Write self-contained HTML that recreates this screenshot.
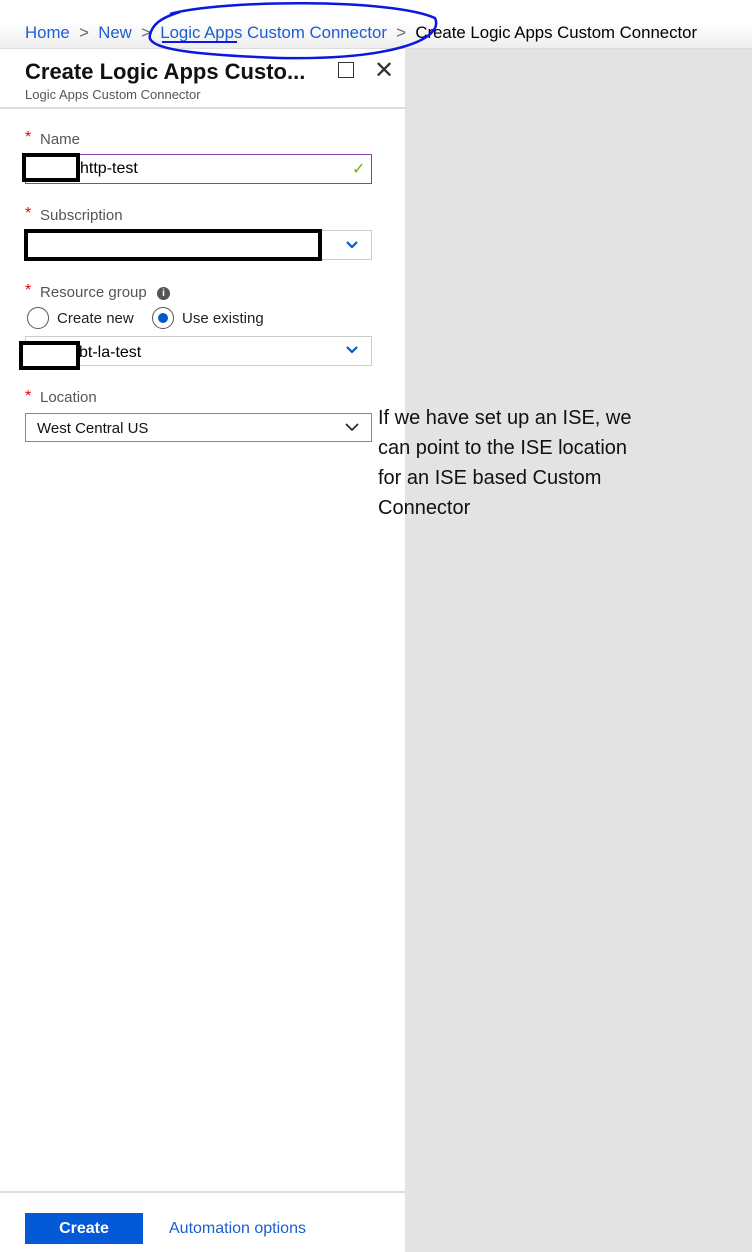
<!DOCTYPE html>
<html><head><style>
body{margin:0;width:752px;height:1252px;position:relative;overflow:hidden;background:#fff;font-family:"Liberation Sans",sans-serif;}
.a{position:absolute;}
.lbl{font-size:15px;color:#555;}
.star{color:#e00;font-size:16px;}
.box{border:1px solid #ccc;background:#fff;box-sizing:border-box;}
.blk{border:4px solid #000;background:#fff;box-sizing:border-box;}
</style></head><body>
<div class="a" style="left:0;top:22px;width:752px;height:26px;background:linear-gradient(#fff,#eee);border-bottom:1px solid #ddd"></div>
<div class="a" style="left:25px;top:23px;font-size:16.8px;color:#1b5ed0;white-space:nowrap">Home <span style="color:#666">&nbsp;&gt;&nbsp;</span> New <span style="color:#666">&nbsp;&gt;&nbsp;</span> Logic Apps Custom Connector <span style="color:#666">&nbsp;&gt;&nbsp;</span> <span style="color:#000">Create Logic Apps Custom Connector</span></div>
<svg class="a" style="left:140px;top:0" width="305" height="65"><path d="M30 14 C80 0 250 -2 295 18 C305 40 250 60 140 58 C60 55 5 50 10 35 C12 25 20 18 40 12" fill="none" stroke="#0a18e0" stroke-width="2.5"/><path d="M22 42 L97 42" stroke="#0a18e0" stroke-width="2"/></svg>
<div class="a" style="left:405px;top:49px;width:347px;height:1203px;background:#e3e3e3"></div>
<div class="a" style="left:25px;top:59px;font-size:22px;font-weight:bold;color:#111">Create Logic Apps Custo...</div>
<div class="a" style="left:25px;top:87px;font-size:13px;color:#555">Logic Apps Custom Connector</div>
<div class="a" style="left:338px;top:62px;width:14px;height:14px;border:1.5px solid #333"></div>
<div class="a" style="left:374px;top:56px;font-size:24px;color:#333">✕</div>
<div class="a" style="left:0;top:107px;width:405px;height:2px;background:#ddd"></div>

<div class="a star" style="left:25px;top:129px">*</div><div class="a lbl" style="left:40px;top:131px">Name</div>
<div class="a box" style="left:25px;top:154px;width:347px;height:30px;border-color:#8e3fa8"></div>
<div class="a" style="left:80px;top:160px;font-size:16px">http-test</div>
<div class="a" style="left:352px;top:159px;color:#6bb700;font-size:16px">✓</div>
<div class="a blk" style="left:22px;top:153px;width:58px;height:29px"></div>

<div class="a star" style="left:25px;top:205px">*</div><div class="a lbl" style="left:40px;top:207px">Subscription</div>
<div class="a box" style="left:25px;top:230px;width:347px;height:30px"></div>
<div class="a blk" style="left:24px;top:229px;width:298px;height:32px"></div>
<svg class="a" style="left:345px;top:240px" width="14" height="10"><path d="M2 2 L7 7 L12 2" fill="none" stroke="#0358c9" stroke-width="2.2"/></svg>

<div class="a star" style="left:25px;top:282px">*</div><div class="a lbl" style="left:40px;top:284px">Resource group</div>
<div class="a" style="left:157px;top:287px;width:13px;height:13px;border-radius:50%;background:#555;color:#fff;font-size:10px;text-align:center;line-height:13px;font-weight:bold">i</div>
<div class="a" style="left:27px;top:307px;width:20px;height:20px;border:1.5px solid #555;border-radius:50%"></div>
<div class="a" style="left:57px;top:310px;font-size:15px;color:#222">Create new</div>
<div class="a" style="left:152px;top:307px;width:20px;height:20px;border:1.5px solid #555;border-radius:50%"></div>
<div class="a" style="left:158px;top:313px;width:10px;height:10px;border-radius:50%;background:#0358c9"></div>
<div class="a" style="left:182px;top:310px;font-size:15px;color:#222">Use existing</div>
<div class="a box" style="left:25px;top:336px;width:347px;height:30px"></div>
<div class="a" style="left:79px;top:344px;font-size:16px">bt-la-test</div>
<div class="a blk" style="left:19px;top:341px;width:61px;height:29px"></div>
<svg class="a" style="left:345px;top:345px" width="14" height="10"><path d="M2 2 L7 7 L12 2" fill="none" stroke="#0358c9" stroke-width="2.2"/></svg>

<div class="a star" style="left:25px;top:388px">*</div><div class="a lbl" style="left:40px;top:389px">Location</div>
<div class="a box" style="left:25px;top:413px;width:347px;height:29px;border-color:#888"></div>
<div class="a" style="left:37px;top:420px;font-size:15px;color:#111">West Central US</div>
<svg class="a" style="left:344px;top:422px" width="16" height="10"><path d="M2 2 L8 8 L14 2" fill="none" stroke="#222" stroke-width="1.6"/></svg>

<div class="a" style="left:378px;top:403px;font-size:20px;line-height:30px;color:#111;width:276px">If we have set up an ISE, we can point to the ISE location for an ISE based Custom Connector</div>

<div class="a" style="left:0;top:1191px;width:405px;height:2px;background:#ddd"></div>
<div class="a" style="left:25px;top:1213px;width:118px;height:31px;background:#0359d6;color:#fff;font-size:16px;font-weight:bold;text-align:center;line-height:32px">Create</div>
<div class="a" style="left:169px;top:1220px;font-size:16px;color:#1b5ed0">Automation options</div>
</body></html>
